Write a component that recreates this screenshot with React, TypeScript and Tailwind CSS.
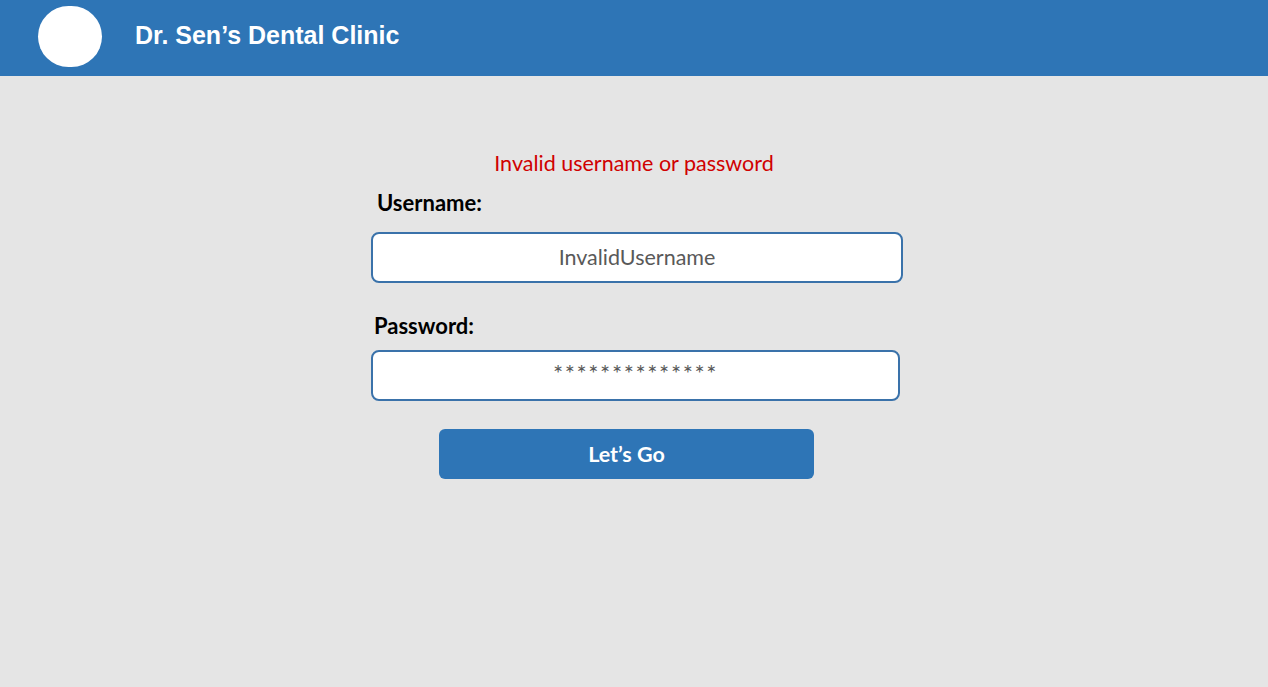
import React from 'react';

const Field = ({ label, value, labelPad, width, gap, valueClass = '' }: any) => (
    <div className="flex flex-col">
        <label className={`text-[22px] font-bold text-black leading-[24px] ${labelPad}`}>{label}</label>
        <div className={`${gap} h-[51px] ${width} bg-white border-2 border-[#3a72aa] rounded-[8px] flex items-center justify-center text-[21.5px] text-[#595959]`}>
            <span className={valueClass}>{value}</span>
        </div>
    </div>
);

export default function App() {
    return (
        <div className="min-h-[687px] bg-[#e5e5e5]" style={{ fontFamily: 'Lato, "Open Sans", sans-serif' }}>
            {/* HEADER */}
            <header className="h-[76px] bg-[#2e75b6] flex items-start pl-[38px] pt-[6px]">
                <div className="w-[64px] h-[61px] rounded-full bg-white" />
                <h1 className="ml-[33px] mt-[14px] text-white text-[25px] leading-[30px] font-bold" style={{ fontFamily: '"Liberation Sans", Arial, sans-serif' }}>
                    Dr. Sen’s Dental Clinic
                </h1>
            </header>

            {/* LOGIN */}
            <main className="pl-[371px] pt-[75px]">
                <div className="w-[532px] flex flex-col">
                    <p className="text-center text-[21.5px] leading-[24px] text-[#d00000] -ml-[6px]">Invalid username or password</p>
                    <div className="mt-[16px]">
                        <Field label="Username:" value="InvalidUsername" labelPad="pl-[6px]" width="w-[532px]" gap="mt-[17px]" />
                    </div>
                    <div className="mt-[31px]">
                        <Field label="Password:" value="**************" labelPad="pl-[3px]" width="w-[529px]" gap="mt-[12px]" valueClass="text-[24px] tracking-[1.6px] pb-[6px] leading-[24px]" />
                    </div>
                    <button className="mt-[28px] ml-[68px] w-[375px] h-[50px] rounded-[6px] bg-[#2e75b6] text-white text-[21.5px] font-bold">
                        Let’s Go
                    </button>
                </div>
            </main>
        </div>
    );
}
